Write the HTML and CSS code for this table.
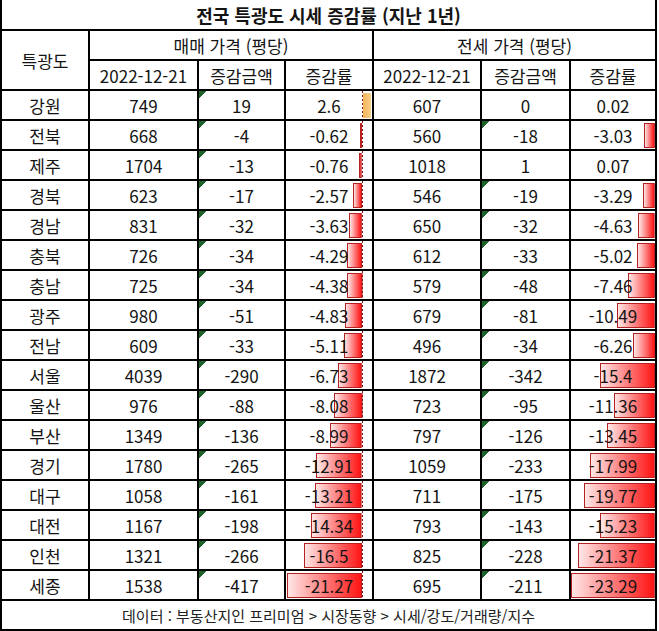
FILE: index.html
```html
<!DOCTYPE html>
<html lang="ko">
<head>
<meta charset="utf-8">
<title>전국 특광도 시세 증감률</title>
<link rel="stylesheet" href="styles.css">
</head>
<body>
<table class="sheet">
  <colgroup>
    <col class="c-region"><col class="c-date"><col class="c-amt"><col class="c-rate">
    <col class="c-date2"><col class="c-amt2"><col class="c-rate2">
  </colgroup>
  <thead>
    <tr class="title-row"><th colspan="7" class="title">전국 특광도 시세 증감률 (지난 1년)</th></tr>
    <tr><th rowspan="2">특광도</th><th colspan="3">매매 가격 (평당)</th><th colspan="3">전세 가격 (평당)</th></tr>
    <tr><th>2022-12-21</th><th>증감금액</th><th>증감률</th><th>2022-12-21</th><th>증감금액</th><th>증감률</th></tr>
  </thead>
  <tbody>
    <tr><td>강원</td><td>749</td><td class="flag">19</td><td class="rate-m pos" style="--w:8px">2.6</td><td>607</td><td>0</td><td class="rate-j" style="--w:0px">0.02</td></tr>
    <tr><td>전북</td><td>668</td><td class="flag">-4</td><td class="rate-m neg" style="--w:2.2px">-0.62</td><td>560</td><td class="flag">-18</td><td class="rate-j neg" style="--w:10.9px">-3.03</td></tr>
    <tr><td>제주</td><td>1704</td><td class="flag">-13</td><td class="rate-m neg" style="--w:2.7px">-0.76</td><td>1018</td><td>1</td><td class="rate-j" style="--w:0px">0.07</td></tr>
    <tr><td>경북</td><td>623</td><td class="flag">-17</td><td class="rate-m neg" style="--w:9.1px">-2.57</td><td>546</td><td class="flag">-19</td><td class="rate-j neg" style="--w:11.8px">-3.29</td></tr>
    <tr><td>경남</td><td>831</td><td class="flag">-32</td><td class="rate-m neg" style="--w:12.8px">-3.63</td><td>650</td><td class="flag">-32</td><td class="rate-j neg" style="--w:16.7px">-4.63</td></tr>
    <tr><td>충북</td><td>726</td><td class="flag">-34</td><td class="rate-m neg" style="--w:15.1px">-4.29</td><td>612</td><td class="flag">-33</td><td class="rate-j neg" style="--w:18.1px">-5.02</td></tr>
    <tr><td>충남</td><td>725</td><td class="flag">-34</td><td class="rate-m neg" style="--w:15.5px">-4.38</td><td>579</td><td class="flag">-48</td><td class="rate-j neg" style="--w:26.9px">-7.46</td></tr>
    <tr><td>광주</td><td>980</td><td class="flag">-51</td><td class="rate-m neg" style="--w:17px">-4.83</td><td>679</td><td class="flag">-81</td><td class="rate-j neg" style="--w:37.8px">-10.49</td></tr>
    <tr><td>전남</td><td>609</td><td class="flag">-33</td><td class="rate-m neg" style="--w:18px">-5.11</td><td>496</td><td class="flag">-34</td><td class="rate-j neg" style="--w:22.5px">-6.26</td></tr>
    <tr><td>서울</td><td>4039</td><td class="flag">-290</td><td class="rate-m neg" style="--w:23.8px">-6.73</td><td>1872</td><td class="flag">-342</td><td class="rate-j neg" style="--w:55.4px">-15.4</td></tr>
    <tr><td>울산</td><td>976</td><td class="flag">-88</td><td class="rate-m neg" style="--w:28.5px">-8.08</td><td>723</td><td class="flag">-95</td><td class="rate-j neg" style="--w:40.9px">-11.36</td></tr>
    <tr><td>부산</td><td>1349</td><td class="flag">-136</td><td class="rate-m neg" style="--w:31.7px">-8.99</td><td>797</td><td class="flag">-126</td><td class="rate-j neg" style="--w:48.4px">-13.45</td></tr>
    <tr><td>경기</td><td>1780</td><td class="flag">-265</td><td class="rate-m neg" style="--w:45.6px">-12.91</td><td>1059</td><td class="flag">-233</td><td class="rate-j neg" style="--w:64.8px">-17.99</td></tr>
    <tr><td>대구</td><td>1058</td><td class="flag">-161</td><td class="rate-m neg" style="--w:46.6px">-13.21</td><td>711</td><td class="flag">-175</td><td class="rate-j neg" style="--w:71.2px">-19.77</td></tr>
    <tr><td>대전</td><td>1167</td><td class="flag">-198</td><td class="rate-m neg" style="--w:50.6px">-14.34</td><td>793</td><td class="flag">-143</td><td class="rate-j neg" style="--w:54.8px">-15.23</td></tr>
    <tr><td>인천</td><td>1321</td><td class="flag">-266</td><td class="rate-m neg" style="--w:58.2px">-16.5</td><td>825</td><td class="flag">-228</td><td class="rate-j neg" style="--w:76.9px">-21.37</td></tr>
    <tr><td>세종</td><td>1538</td><td class="flag">-417</td><td class="rate-m neg" style="--w:75px">-21.27</td><td>695</td><td class="flag">-211</td><td class="rate-j neg" style="--w:83.8px">-23.29</td></tr>
  </tbody>
  <tfoot>
    <tr><td colspan="7" class="source">데이터 : 부동산지인 프리미엄 &gt; 시장동향 &gt; 시세/강도/거래량/지수</td></tr>
  </tfoot>
</table>
</body>
</html>
```
FILE: styles.css
```css
html, body {
  margin: 0;
  padding: 0;
  background: #fff;
}

.sheet {
  border-collapse: collapse;
  table-layout: fixed;
  width: 657px;
  font-family: "Noto Sans CJK KR", "Noto Sans", sans-serif;
  font-size: 17px;
  color: #141414;
}

.c-region { width: 88px; }
.c-date { width: 109px; }
.c-amt { width: 87px; }
.c-rate { width: 88px; }
.c-date2 { width: 108px; }
.c-amt2 { width: 89px; }
.c-rate2 { width: 86px; }

.sheet tr { height: 30px; }

.sheet th,
.sheet td {
  border: 2px solid #000;
  padding: 0;
  text-align: center;
  vertical-align: middle;
  font-weight: normal;
  line-height: 1;
  white-space: nowrap;
  overflow: hidden;
}

.sheet .title {
  border-top: none;
  font-weight: bold;
  font-size: 18px;
}

.title-row { height: 29px; }

/* green "number stored as text" corner marker */
.flag {
  background: linear-gradient(135deg, #1b6328 0 50%, transparent 50%) left top / 8px 8px no-repeat;
}

/* 매매 증감률: axis near the right edge, dashed */
.rate-m {
  background:
    repeating-linear-gradient(to bottom, #7d1414 0 2px, transparent 2px 4px) right 9px top / 1px 100% no-repeat;
}

.rate-m.neg {
  background:
    repeating-linear-gradient(to bottom, #7d1414 0 2px, transparent 2px 4px) right 9px top / 1px 100% no-repeat,
    linear-gradient(to right, #ffe6e6, #ff1414) right 11px center / max(0px, calc(var(--w) - 2px)) 23px no-repeat,
    linear-gradient(#b42222, #b42222) right 10px center / var(--w) 25px no-repeat;
}

.rate-m.pos {
  background:
    repeating-linear-gradient(to bottom, #7d1414 0 2px, transparent 2px 4px) right 9px top / 1px 100% no-repeat,
    linear-gradient(to right, #f3b458, #f8cf8a) right calc(9px - var(--w)) center / var(--w) 25px no-repeat;
}

/* 전세 증감률: axis at the right edge */
.rate-j.neg {
  background:
    linear-gradient(to right, #ffe6e6, #ff1414) right 1px center / max(0px, calc(var(--w) - 2px)) 23px no-repeat,
    linear-gradient(#b42222, #b42222) right 0 center / var(--w) 25px no-repeat;
}

.sheet .source {
  font-size: 15px;
  color: #222;
}
```
